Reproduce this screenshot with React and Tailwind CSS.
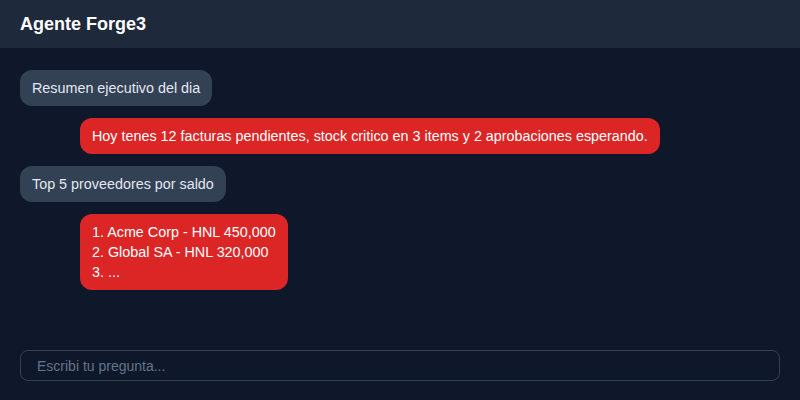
import React from "react";

const messages = [
    { role: "user", text: "Resumen ejecutivo del dia" },
    {
        role: "bot",
        text: "Hoy tenes 12 facturas pendientes, stock critico en 3 items y 2 aprobaciones esperando.",
    },
    { role: "user", text: "Top 5 proveedores por saldo" },
    {
        role: "bot",
        text: "1. Acme Corp - HNL 450,000\n2. Global SA - HNL 320,000\n3. ...",
    },
];

const App = () => {
    return (
        <div
            className="h-screen flex flex-col bg-[#0f172a] text-white"
            style={{ fontFamily: '"Liberation Sans", Arial, sans-serif' }}
        >
            <header className="h-12 flex items-center px-5 bg-[#1e293b] shrink-0">
                <h1 className="text-lg font-bold">Agente Forge3</h1>
            </header>

            <main className="flex-1 flex flex-col items-start gap-3 px-5 pt-[22px] overflow-hidden">
                {messages.map((m, i) => (
                    <div
                        key={i}
                        className={
                            m.role === "user"
                                ? "px-3 py-2 rounded-xl bg-[#334155] text-[14.35px] leading-5 text-[#e2e8f0] whitespace-pre-line"
                                : "ml-[60px] px-3 py-2 rounded-xl bg-[#dc2626] text-[14.35px] leading-5 text-white whitespace-pre-line"
                        }
                    >
                        {m.text}
                    </div>
                ))}
            </main>

            <footer className="px-5 pb-[19px] shrink-0">
                <input
                    type="text"
                    placeholder="Escribi tu pregunta..."
                    className="w-full h-[31px] px-4 rounded-lg border border-[#334155] bg-[#0f172a] text-sm text-white placeholder:text-[#64748b] outline-none"
                />
            </footer>
        </div>
    );
};

export default App;
